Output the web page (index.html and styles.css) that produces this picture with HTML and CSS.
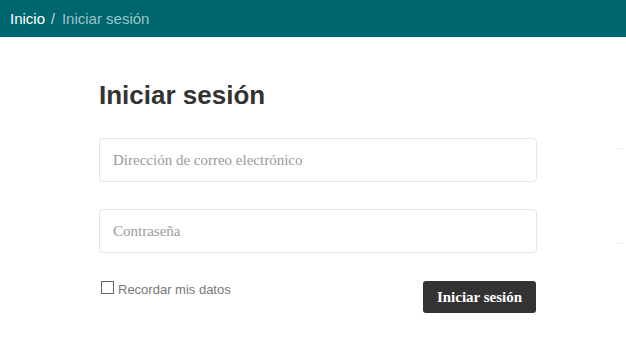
FILE: index.html
```html
<!DOCTYPE html>
<html lang="es">
<head>
<meta charset="utf-8">
<title>Iniciar sesión</title>
<link rel="stylesheet" href="styles.css">
</head>
<body>
<header class="topbar">
  <nav class="crumbs">
    <a class="crumb-link" href="#">Inicio</a>
    <span class="crumb-sep">/</span>
    <span class="crumb-current">Iniciar sesión</span>
  </nav>
</header>
<main class="page">
  <form class="login">
    <h1 class="title">Iniciar sesión</h1>
    <input class="field" type="email" placeholder="Dirección de correo electrónico">
    <input class="field" type="password" placeholder="Contraseña">
    <div class="actions">
      <label class="remember"><input class="check" type="checkbox"><span>Recordar mis datos</span></label>
      <button class="submit" type="button">Iniciar sesión</button>
    </div>
  </form>
  <span class="edge-mark edge-mark-1"></span>
  <span class="edge-mark edge-mark-2"></span>
</main>
</body>
</html>
```
FILE: styles.css
```css
* { box-sizing: border-box; }
html, body { margin: 0; padding: 0; background: #fff; }
body { font-family: "Liberation Sans", Arial, sans-serif; color: #333; }

.topbar {
  height: 37px;
  background: #00666e;
  display: flex;
  align-items: center;
  padding: 0 0 0 10px;
}
.crumbs {
  display: flex;
  align-items: baseline;
  font-size: 15px;
  line-height: 18px;
}
.crumb-link { color: #fff; text-decoration: none; }
.crumb-sep { color: #c4dcdd; margin: 0 7px 0 6px; font-size: 14px; }
.crumb-current { color: #9cc4c6; }

.page { position: relative; padding: 43px 0 0 99px; }
.login { width: 438px; display: flex; flex-direction: column; }
.title {
  margin: 0 0 28px 0;
  font-size: 26px;
  line-height: 30px;
  font-weight: bold;
  color: #333;
}
.field {
  height: 44px;
  width: 100%;
  border: 1px solid #e4e4e4;
  border-radius: 4px;
  padding: 0 13px;
  font-family: "Liberation Serif", "Times New Roman", serif;
  font-size: 15px;
  color: #333;
  outline: none;
  margin: 0 0 27px 0;
}
.field::placeholder { color: #9a9a9a; }
.actions {
  display: flex;
  justify-content: space-between;
  align-items: flex-start;
  margin-top: 1px;
}
.remember {
  display: flex;
  align-items: flex-start;
  gap: 4px;
  font-family: "Liberation Sans", Arial, sans-serif;
  font-size: 13px;
  line-height: 17px;
  color: #777;
  padding-left: 2px;
}
.check {
  appearance: none;
  -webkit-appearance: none;
  width: 13px;
  height: 13px;
  margin: 0;
  border: 1px solid #666;
  border-radius: 0;
  background: #fff;
}
.submit {
  width: 113px;
  height: 32px;
  margin-right: 1px;
  background: #333;
  color: #fff;
  border: 0;
  border-radius: 3px;
  font-family: "Liberation Serif", "Times New Roman", serif;
  font-weight: bold;
  font-size: 15px;
  padding: 0;
}
.edge-mark {
  position: absolute;
  left: 618px;
  width: 6px;
  height: 1px;
  background: #eee;
}
.edge-mark-1 { top: 111px; }
.edge-mark-2 { top: 206px; }
```
